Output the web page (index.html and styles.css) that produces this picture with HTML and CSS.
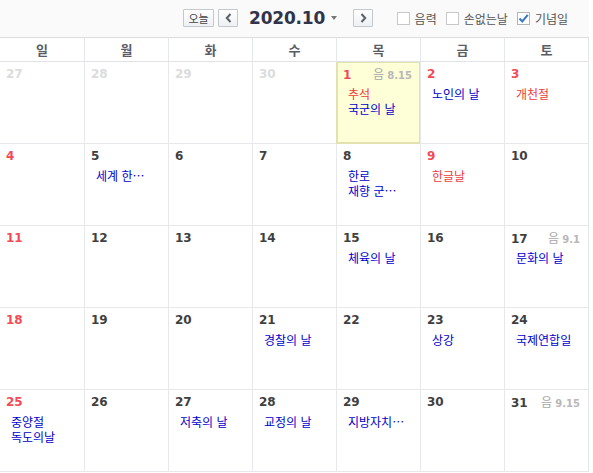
FILE: index.html
```html
<!DOCTYPE html>
<html lang="ko">
<head>
<meta charset="utf-8">
<link rel="stylesheet" href="styles.css">
</head>
<body>
<div class="cal">
  <div class="topbar">
    <div class="nav">
      <button class="btn today-btn">오늘</button>
      <button class="btn arrow-btn" aria-label="이전"><svg width="7" height="10" viewBox="0 0 7 10"><path d="M5.5 1 L1.8 5 L5.5 9" fill="none" stroke="#5a5f6a" stroke-width="2"/></svg></button>
      <span class="title">2020.10</span>
      <span class="caret"></span>
      <button class="btn arrow-btn" aria-label="다음"><svg width="7" height="10" viewBox="0 0 7 10"><path d="M1.5 1 L5.2 5 L1.5 9" fill="none" stroke="#5a5f6a" stroke-width="2"/></svg></button>
    </div>
    <div class="opts">
      <label class="opt"><span class="box"></span>음력</label>
      <label class="opt"><span class="box"></span>손없는날</label>
      <label class="opt"><span class="box on"><svg width="11" height="11" viewBox="0 0 11 11"><path d="M1.5 5.5 L4.3 8.5 L9.8 1.8" fill="none" stroke="#3b79c4" stroke-width="2"/></svg></span>기념일</label>
    </div>
  </div>
  <div class="week">
    <div class="wd">일</div><div class="wd">월</div><div class="wd">화</div><div class="wd">수</div><div class="wd">목</div><div class="wd">금</div><div class="wd">토</div>
  </div>
  <div class="grid">
    <div class="cell"><div class="head"><span class="num prev">27</span></div></div>
    <div class="cell"><div class="head"><span class="num prev">28</span></div></div>
    <div class="cell"><div class="head"><span class="num prev">29</span></div></div>
    <div class="cell"><div class="head"><span class="num prev">30</span></div></div>
    <div class="cell today"><div class="head"><span class="num red">1</span><span class="lunar">음 <b>8.15</b></span></div><div class="ev hol">추석</div><div class="ev">국군의 날</div></div>
    <div class="cell"><div class="head"><span class="num red">2</span></div><div class="ev">노인의 날</div></div>
    <div class="cell"><div class="head"><span class="num red">3</span></div><div class="ev hol">개천절</div></div>

    <div class="cell"><div class="head"><span class="num red">4</span></div></div>
    <div class="cell"><div class="head"><span class="num">5</span></div><div class="ev">세계 한⋯</div></div>
    <div class="cell"><div class="head"><span class="num">6</span></div></div>
    <div class="cell"><div class="head"><span class="num">7</span></div></div>
    <div class="cell"><div class="head"><span class="num">8</span></div><div class="ev">한로</div><div class="ev">재향 군⋯</div></div>
    <div class="cell"><div class="head"><span class="num red">9</span></div><div class="ev hol">한글날</div></div>
    <div class="cell"><div class="head"><span class="num">10</span></div></div>

    <div class="cell"><div class="head"><span class="num red">11</span></div></div>
    <div class="cell"><div class="head"><span class="num">12</span></div></div>
    <div class="cell"><div class="head"><span class="num">13</span></div></div>
    <div class="cell"><div class="head"><span class="num">14</span></div></div>
    <div class="cell"><div class="head"><span class="num">15</span></div><div class="ev">체육의 날</div></div>
    <div class="cell"><div class="head"><span class="num">16</span></div></div>
    <div class="cell"><div class="head"><span class="num">17</span><span class="lunar">음 <b>9.1</b></span></div><div class="ev">문화의 날</div></div>

    <div class="cell"><div class="head"><span class="num red">18</span></div></div>
    <div class="cell"><div class="head"><span class="num">19</span></div></div>
    <div class="cell"><div class="head"><span class="num">20</span></div></div>
    <div class="cell"><div class="head"><span class="num">21</span></div><div class="ev">경찰의 날</div></div>
    <div class="cell"><div class="head"><span class="num">22</span></div></div>
    <div class="cell"><div class="head"><span class="num">23</span></div><div class="ev">상강</div></div>
    <div class="cell"><div class="head"><span class="num">24</span></div><div class="ev">국제연합일</div></div>

    <div class="cell"><div class="head"><span class="num red">25</span></div><div class="ev">중양절</div><div class="ev">독도의날</div></div>
    <div class="cell"><div class="head"><span class="num">26</span></div></div>
    <div class="cell"><div class="head"><span class="num">27</span></div><div class="ev">저축의 날</div></div>
    <div class="cell"><div class="head"><span class="num">28</span></div><div class="ev">교정의 날</div></div>
    <div class="cell"><div class="head"><span class="num">29</span></div><div class="ev">지방자치⋯</div></div>
    <div class="cell"><div class="head"><span class="num">30</span></div></div>
    <div class="cell"><div class="head"><span class="num">31</span><span class="lunar">음 <b>9.15</b></span></div></div>
  </div>
</div>
</body>
</html>
```

FILE: styles.css
```css
* { box-sizing: border-box; }
body {
  margin: 0;
  background: #fff;
  font-family: "Noto Sans CJK KR", "DejaVu Sans", sans-serif;
  font-size: 12px;
}
.cal { width: 589px; }

.topbar {
  height: 38px;
  background: #fafafa;
  border-bottom: 1px solid #dcdcdc;
  display: flex;
  align-items: center;
  padding: 0 21px 1px 183px;
}
.nav { display: flex; align-items: center; }
.btn {
  margin: 0;
  padding: 0;
  height: 18px;
  border: 1px solid #c3c7ce;
  border-radius: 1px;
  background: linear-gradient(#ffffff, #eef0f3);
  display: flex;
  align-items: center;
  justify-content: center;
  font-family: "Noto Sans CJK KR", sans-serif;
  font-size: 11px;
  color: #444;
}
.today-btn { width: 31px; line-height: 16px; }
.arrow-btn { width: 20px; margin-left: 4px; }
.title {
  margin-left: 11px;
  font-family: "DejaVu Sans", sans-serif;
  font-weight: bold;
  font-size: 17px;
  color: #30334a;
  letter-spacing: -0.2px;
}
.caret {
  margin-left: 6px;
  margin-right: 12px;
  width: 0;
  height: 0;
  border-left: 3.5px solid transparent;
  border-right: 3.5px solid transparent;
  border-top: 4px solid #777;
}
.opts { margin-left: auto; display: flex; align-items: center; gap: 9px; }
.opt {
  display: flex;
  align-items: center;
  gap: 5px;
  color: #555;
  font-size: 12px;
}
.box {
  width: 13px;
  height: 13px;
  border: 1px solid #c8c8c8;
  background: #fff;
  display: flex;
  align-items: center;
  justify-content: center;
}
.box.on { border-color: #b5b5b5; }

.week {
  display: grid;
  grid-template-columns: repeat(7, 84px);
  border-right: 1px solid #e4e7ec;
  border-bottom: 1px solid #dfe2e6;
  height: 24px;
}
.wd {
  text-align: center;
  font-weight: bold;
  font-size: 13px;
  line-height: 23px;
  color: #5a5d66;
  border-left: 1px solid #e4e7ec;
}
.wd:first-child { border-left: none; }

.grid {
  display: grid;
  grid-template-columns: repeat(7, 84px);
  grid-auto-rows: 82px;
  border-right: 1px solid #e4e7ec;
}
.cell {
  border-left: 1px solid #e6e8ec;
  border-bottom: 1px solid #e6e8ec;
  padding: 4px 8px 0 6px;
  overflow: hidden;
}
.cell:nth-child(7n+1) { border-left: none; }
.cell.today {
  background: #ffffd7;
  box-shadow: inset 0 0 0 1px #e2e2b0;
  border-left-color: #e2e2b0;
  border-bottom-color: #e2e2b0;
}
.head {
  display: flex;
  justify-content: space-between;
  align-items: baseline;
  height: 16px;
  line-height: 16px;
}
.num {
  font-family: "DejaVu Sans", sans-serif;
  font-weight: bold;
  font-size: 12px;
  color: #3f3f3f;
}
.num.red { color: #f24b55; }
.num.prev { color: #dcdcdc; }
.lunar {
  color: #a8a8a8;
  font-size: 12px;
}
.lunar b {
  font-family: "DejaVu Sans", sans-serif;
  font-size: 10px;
  color: #b8b8b8;
}
.ev {
  margin-left: 5px;
  line-height: 15px;
  color: #0000cc;
  white-space: nowrap;
}
.head + .ev { margin-top: 4px; }
.ev.hol { color: #ee3b3b; }
```
